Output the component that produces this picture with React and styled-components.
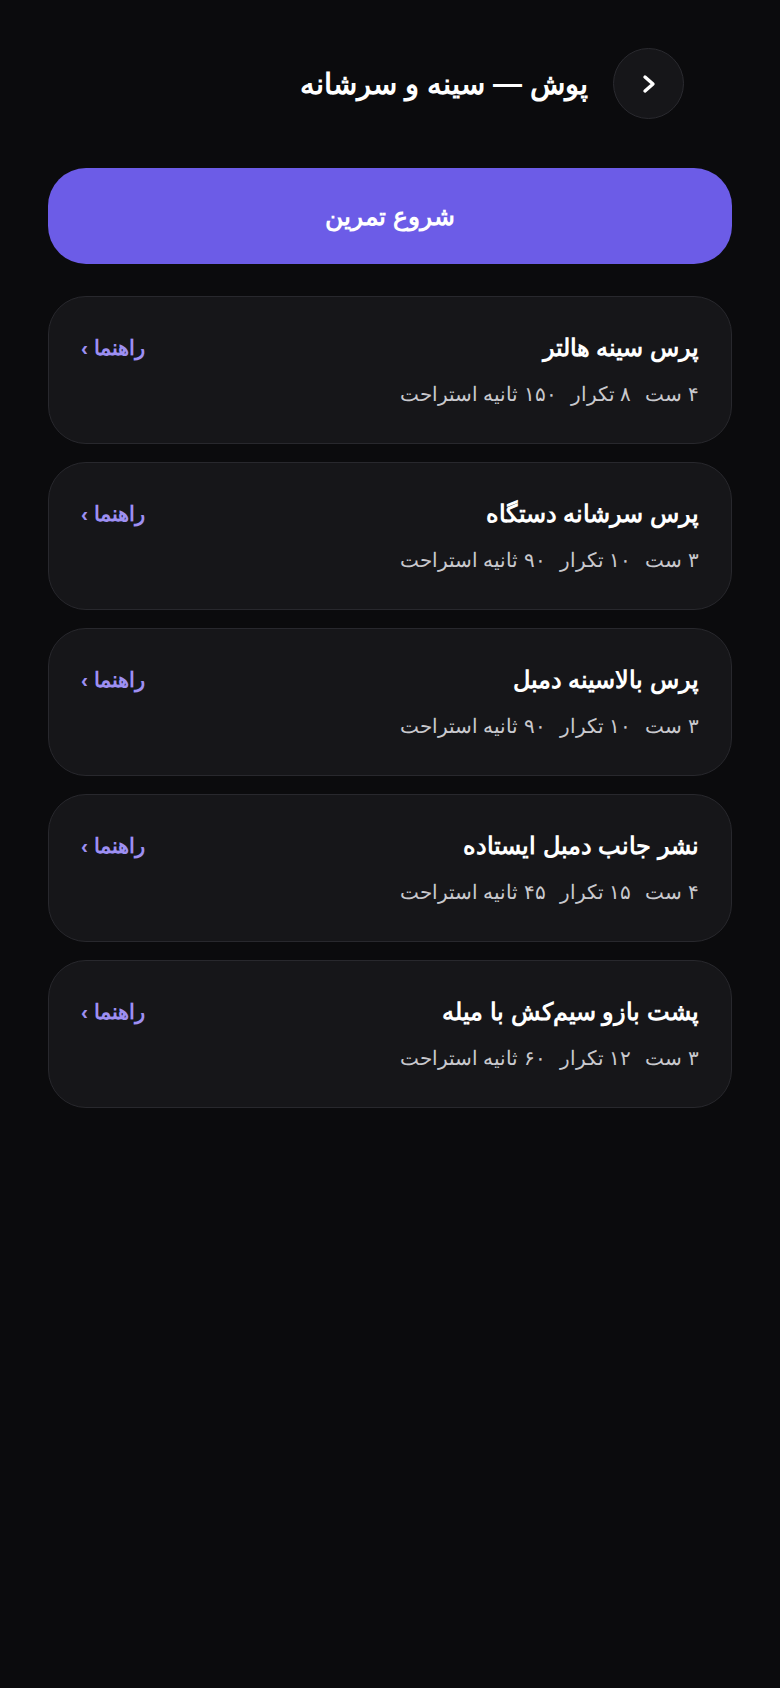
import styled, { createGlobalStyle } from "styled-components";

const GlobalStyle = createGlobalStyle`
  html, body {
    margin: 0;
    padding: 0;
    background: #0b0b0d;
  }
  body {
    font-family: "Liberation Sans", "Noto Sans", sans-serif;
    color: #ffffff;
  }
`;

const exercises = [
    { name: "پرس سینه هالتر", sets: "۴", reps: "۸", rest: "۱۵۰" },
    { name: "پرس سرشانه دستگاه", sets: "۳", reps: "۱۰", rest: "۹۰" },
    { name: "پرس بالاسینه دمبل", sets: "۳", reps: "۱۰", rest: "۹۰" },
    { name: "نشر جانب دمبل ایستاده", sets: "۴", reps: "۱۵", rest: "۴۵" },
    { name: "پشت بازو سیم‌کش با میله", sets: "۳", reps: "۱۲", rest: "۶۰" },
];

function App() {
    return (
        <Page dir="rtl">
            <GlobalStyle />
            <Header>
                <BackButton aria-label="بازگشت">
                    <svg width="16" height="20" viewBox="0 0 16 20" fill="none">
                        <path d="M4 3 L12 10 L4 17" stroke="#fff" strokeWidth="3.4" strokeLinecap="round" strokeLinejoin="round" />
                    </svg>
                </BackButton>
                <Title>پوش — سینه و سرشانه</Title>
            </Header>

            <StartButton>شروع تمرین</StartButton>

            <List>
                {exercises.map((ex) => (
                    <Card key={ex.name}>
                        <CardTop>
                            <ExerciseName>{ex.name}</ExerciseName>
                            <GuideLink>راهنما ›</GuideLink>
                        </CardTop>
                        <Meta>
                            <span>{ex.sets} ست</span>
                            <span>{ex.reps} تکرار</span>
                            <span>{ex.rest} ثانیه استراحت</span>
                        </Meta>
                    </Card>
                ))}
            </List>
        </Page>
    );
}

export default App;

const Page = styled.div`
    min-height: 1688px;
    box-sizing: border-box;
    padding: 48px 48px;
    background: #0b0b0d;
`;

const Header = styled.div`
    display: flex;
    align-items: center;
    gap: 25px;
    padding-right: 48px;
    height: 71px;
    margin-bottom: 49px;
`;

const BackButton = styled.button`
    width: 71px;
    height: 71px;
    flex-shrink: 0;
    border-radius: 50%;
    border: 1.5px solid #2a2a2f;
    background: #161619;
    padding: 0;
    display: flex;
    align-items: center;
    justify-content: center;
`;

const Title = styled.h1`
    margin: 0;
    font-size: 29px;
    font-weight: 700;
    color: #ffffff;
`;

const StartButton = styled.button`
    display: block;
    width: 100%;
    height: 96px;
    border: none;
    border-radius: 38px;
    background: #6c5ce7;
    color: #ffffff;
    font-family: "Liberation Sans", sans-serif;
    font-size: 25px;
    font-weight: 700;
    margin-bottom: 32px;
`;

const List = styled.div`
    display: flex;
    flex-direction: column;
    gap: 18px;
`;

const Card = styled.div`
    height: 148px;
    box-sizing: border-box;
    padding: 0 32px;
    border: 1.5px solid #28282d;
    border-radius: 38px;
    background: #161619;
    display: flex;
    flex-direction: column;
    justify-content: center;
    gap: 20px;
`;

const CardTop = styled.div`
    display: flex;
    align-items: center;
    justify-content: space-between;
`;

const ExerciseName = styled.div`
    font-size: 24px;
    font-weight: 700;
    color: #ffffff;
`;

const GuideLink = styled.span`
    font-size: 21px;
    font-weight: 700;
    color: #9d8ff2;
`;

const Meta = styled.div`
    display: flex;
    gap: 14px;
    font-size: 20px;
    color: #c9c9ce;
`;
